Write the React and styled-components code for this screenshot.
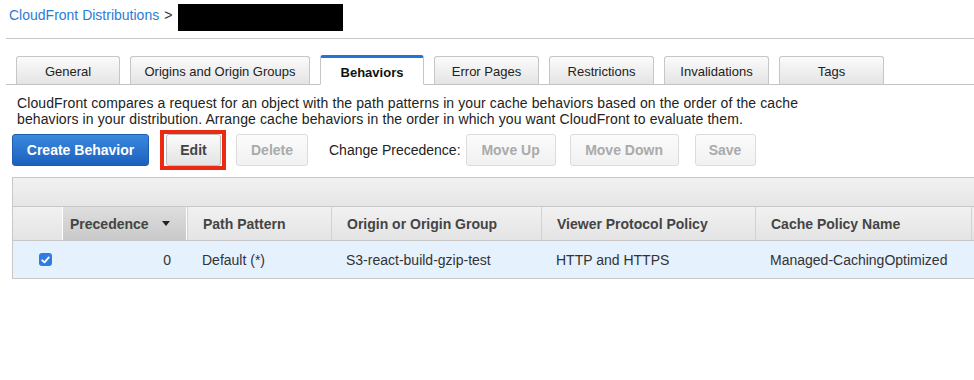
import React from 'react'
import styled, { createGlobalStyle } from 'styled-components'

const GlobalStyle = createGlobalStyle`
    body {
        margin: 0;
        background: #fff;
        font-family: "Liberation Sans", Arial, Helvetica, sans-serif;
        color: #222;
    }
`

const Page = styled.div`
    width: 974px;
    height: 380px;
    overflow: hidden;
`

const Breadcrumb = styled.div`
    display: flex;
    align-items: flex-start;
    height: 39px;
    box-sizing: border-box;
    margin-left: 6px;
    padding: 7px 0 0 3px;
    font-size: 14px;
    line-height: 16px;
    color: #333;
    border-bottom: 1px solid #c9c9c9;
`

const Crumb = styled.a`
    color: #2b7bd6;
    text-decoration: none;
    margin-right: 5px;
`

const Redacted = styled.span`
    display: inline-block;
    width: 165px;
    height: 27px;
    background: #000;
    margin-left: 6px;
    margin-top: -3px;
`

const TabBar = styled.div`
    display: flex;
    align-items: flex-end;
    gap: 10px;
    margin: 17px 0 0 6px;
    padding-left: 10px;
    border-bottom: 1px solid #c3c3c3;
    height: 28px;
`

const Tab = styled.div`
    width: ${p => p.$w}px;
    height: ${p => (p.$active ? 24 : 25)}px;
    display: flex;
    align-items: center;
    justify-content: center;
    padding-top: 2px;
    font-size: 13px;
    margin-bottom: -1px;
    border: 1px solid #c6c6c6;
    border-radius: 3px 3px 0 0;
    ${p => p.$active
        ? `
        background: #fff;
        border-top: 3px solid #2474d3;
        border-bottom-color: #fff;
        font-weight: bold;
        color: #111;
    `
        : `
        background: linear-gradient(#fbfbfb, #e4e4e4);
        border-bottom-color: #c3c3c3;
        color: #222;
    `}
`

const Content = styled.div`
    padding-left: 12px;
`

const Intro = styled.p`
    margin: 10px 0 0 5px;
    font-size: 14px;
    line-height: 16px;
    letter-spacing: 0.1px;
    color: #222;
`

const Toolbar = styled.div`
    display: flex;
    align-items: center;
    height: 40px;
    margin-top: 3px;
`

const Button = styled.button`
    height: 32px;
    width: ${p => p.$w}px;
    margin-left: ${p => p.$ml || 0}px;
    border-radius: 3px;
    font-family: inherit;
    font-size: 14px;
    font-weight: bold;
    padding: 0;
    cursor: default;
    ${p => p.$primary
        ? `
        color: #fff;
        background: linear-gradient(#3a89de, #1c60bd);
        border: 1px solid #1d5fae;
    `
        : p.disabled
            ? `
        color: #aaa;
        background: linear-gradient(#fbfbfb, #f1f1f1);
        border: 1px solid #dcdcdc;
    `
            : `
        color: #444;
        background: linear-gradient(#fbfbfb, #e3e3e3);
        border: 1px solid #bdbdbd;
    `}
`

const Highlight = styled.div`
    margin-left: 11px;
    border: 4px solid #ec2a12;
    padding: 0 1px 0 2px;
    height: 32px;
    display: flex;
    align-items: center;
`

const Label = styled.span`
    font-size: 14px;
    color: #222;
    margin-left: 21px;
    margin-right: 5px;
`

const Table = styled.div`
    margin-top: 7px;
    width: 970px;
    border: 1px solid #c8c8c8;
    border-right: none;
    border-bottom: none;
`

const GridBar = styled.div`
    height: 28px;
    background: linear-gradient(#f1f1f1, #e6e6e6);
    border-bottom: 1px solid #c8c8c8;
`

const Row = styled.div`
    display: grid;
    grid-template-columns: 49px 125px 144px 210px 214px 216px 1fr;
    height: ${p => (p.$head ? 33 : 37)}px;
    background: ${p => (p.$head ? 'linear-gradient(#f1f1f1, #e4e4e4)' : '#e5f1fd')};
    border-bottom: 1px solid #c8c8c8;
`

const HeadCell = styled.div`
    display: flex;
    align-items: center;
    padding-left: ${p => (p.$sorted ? 7 : 15)}px;
    font-size: 14px;
    font-weight: bold;
    color: #444;
    border-left: 1px solid ${p => (p.$first ? 'transparent' : p.$sorted ? '#fff' : '#d2d2d2')};
    ${p => p.$sorted && `
        background: linear-gradient(#dedede, #c9c9c9);
        border-right: 1px solid #fff;
    `}
`

const SortArrow = styled.span`
    margin-left: 13px;
    width: 0;
    height: 0;
    border-left: 4px solid transparent;
    border-right: 4px solid transparent;
    border-top: 5px solid #222;
`

const Cell = styled.div`
    display: flex;
    align-items: center;
    justify-content: ${p => (p.$right ? 'flex-end' : p.$center ? 'center' : 'flex-start')};
    padding: ${p => (p.$right ? '0 16px 0 0' : '0 0 0 15px')};
    font-size: 14px;
    color: #333;
`

const Check = styled.span`
    width: 13px;
    height: 13px;
    border-radius: 3px;
    background: #2f7be2;
    display: flex;
    align-items: center;
    justify-content: center;
`

const tabs = [
    { name: 'General', w: 102 },
    { name: 'Origins and Origin Groups', w: 178 },
    { name: 'Behaviors', w: 102, active: true },
    { name: 'Error Pages', w: 103 },
    { name: 'Restrictions', w: 103 },
    { name: 'Invalidations', w: 103 },
    { name: 'Tags', w: 103 },
]

const App = () => {
    return (
        <Page>
            <GlobalStyle />
            <Breadcrumb>
                <Crumb href="#">CloudFront Distributions</Crumb>&gt;
                <Redacted />
            </Breadcrumb>
            <TabBar>
                {tabs.map(t => (
                    <Tab key={t.name} $w={t.w} $active={t.active}>{t.name}</Tab>
                ))}
            </TabBar>
            <Content>
                <Intro>
                    CloudFront compares a request for an object with the path patterns in your cache behaviors based on the order of the cache<br />
                    behaviors in your distribution. Arrange cache behaviors in the order in which you want CloudFront to evaluate them.
                </Intro>
                <Toolbar>
                    <Button $primary $w={137}>Create Behavior</Button>
                    <Highlight>
                        <Button $w={55}>Edit</Button>
                    </Highlight>
                    <Button disabled $w={72} $ml={10}>Delete</Button>
                    <Label>Change Precedence:</Label>
                    <Button disabled $w={90}>Move Up</Button>
                    <Button disabled $w={109} $ml={14}>Move Down</Button>
                    <Button disabled $w={61} $ml={16}>Save</Button>
                </Toolbar>
                <Table>
                    <GridBar />
                    <Row $head>
                        <HeadCell $first />
                        <HeadCell $sorted>Precedence<SortArrow /></HeadCell>
                        <HeadCell>Path Pattern</HeadCell>
                        <HeadCell>Origin or Origin Group</HeadCell>
                        <HeadCell>Viewer Protocol Policy</HeadCell>
                        <HeadCell>Cache Policy Name</HeadCell>
                        <HeadCell />
                    </Row>
                    <Row>
                        <Cell $center>
                            <Check>
                                <svg width="9" height="8" viewBox="0 0 9 8">
                                    <path d="M1.2 4.3 L3.5 6.4 L7.8 1.4" stroke="#fff" strokeWidth="1.8" fill="none" strokeLinecap="round" strokeLinejoin="round" />
                                </svg>
                            </Check>
                        </Cell>
                        <Cell $right>0</Cell>
                        <Cell>Default (*)</Cell>
                        <Cell>S3-react-build-gzip-test</Cell>
                        <Cell>HTTP and HTTPS</Cell>
                        <Cell>Managed-CachingOptimized</Cell>
                        <Cell />
                    </Row>
                </Table>
            </Content>
        </Page>
    )
}

export default App
